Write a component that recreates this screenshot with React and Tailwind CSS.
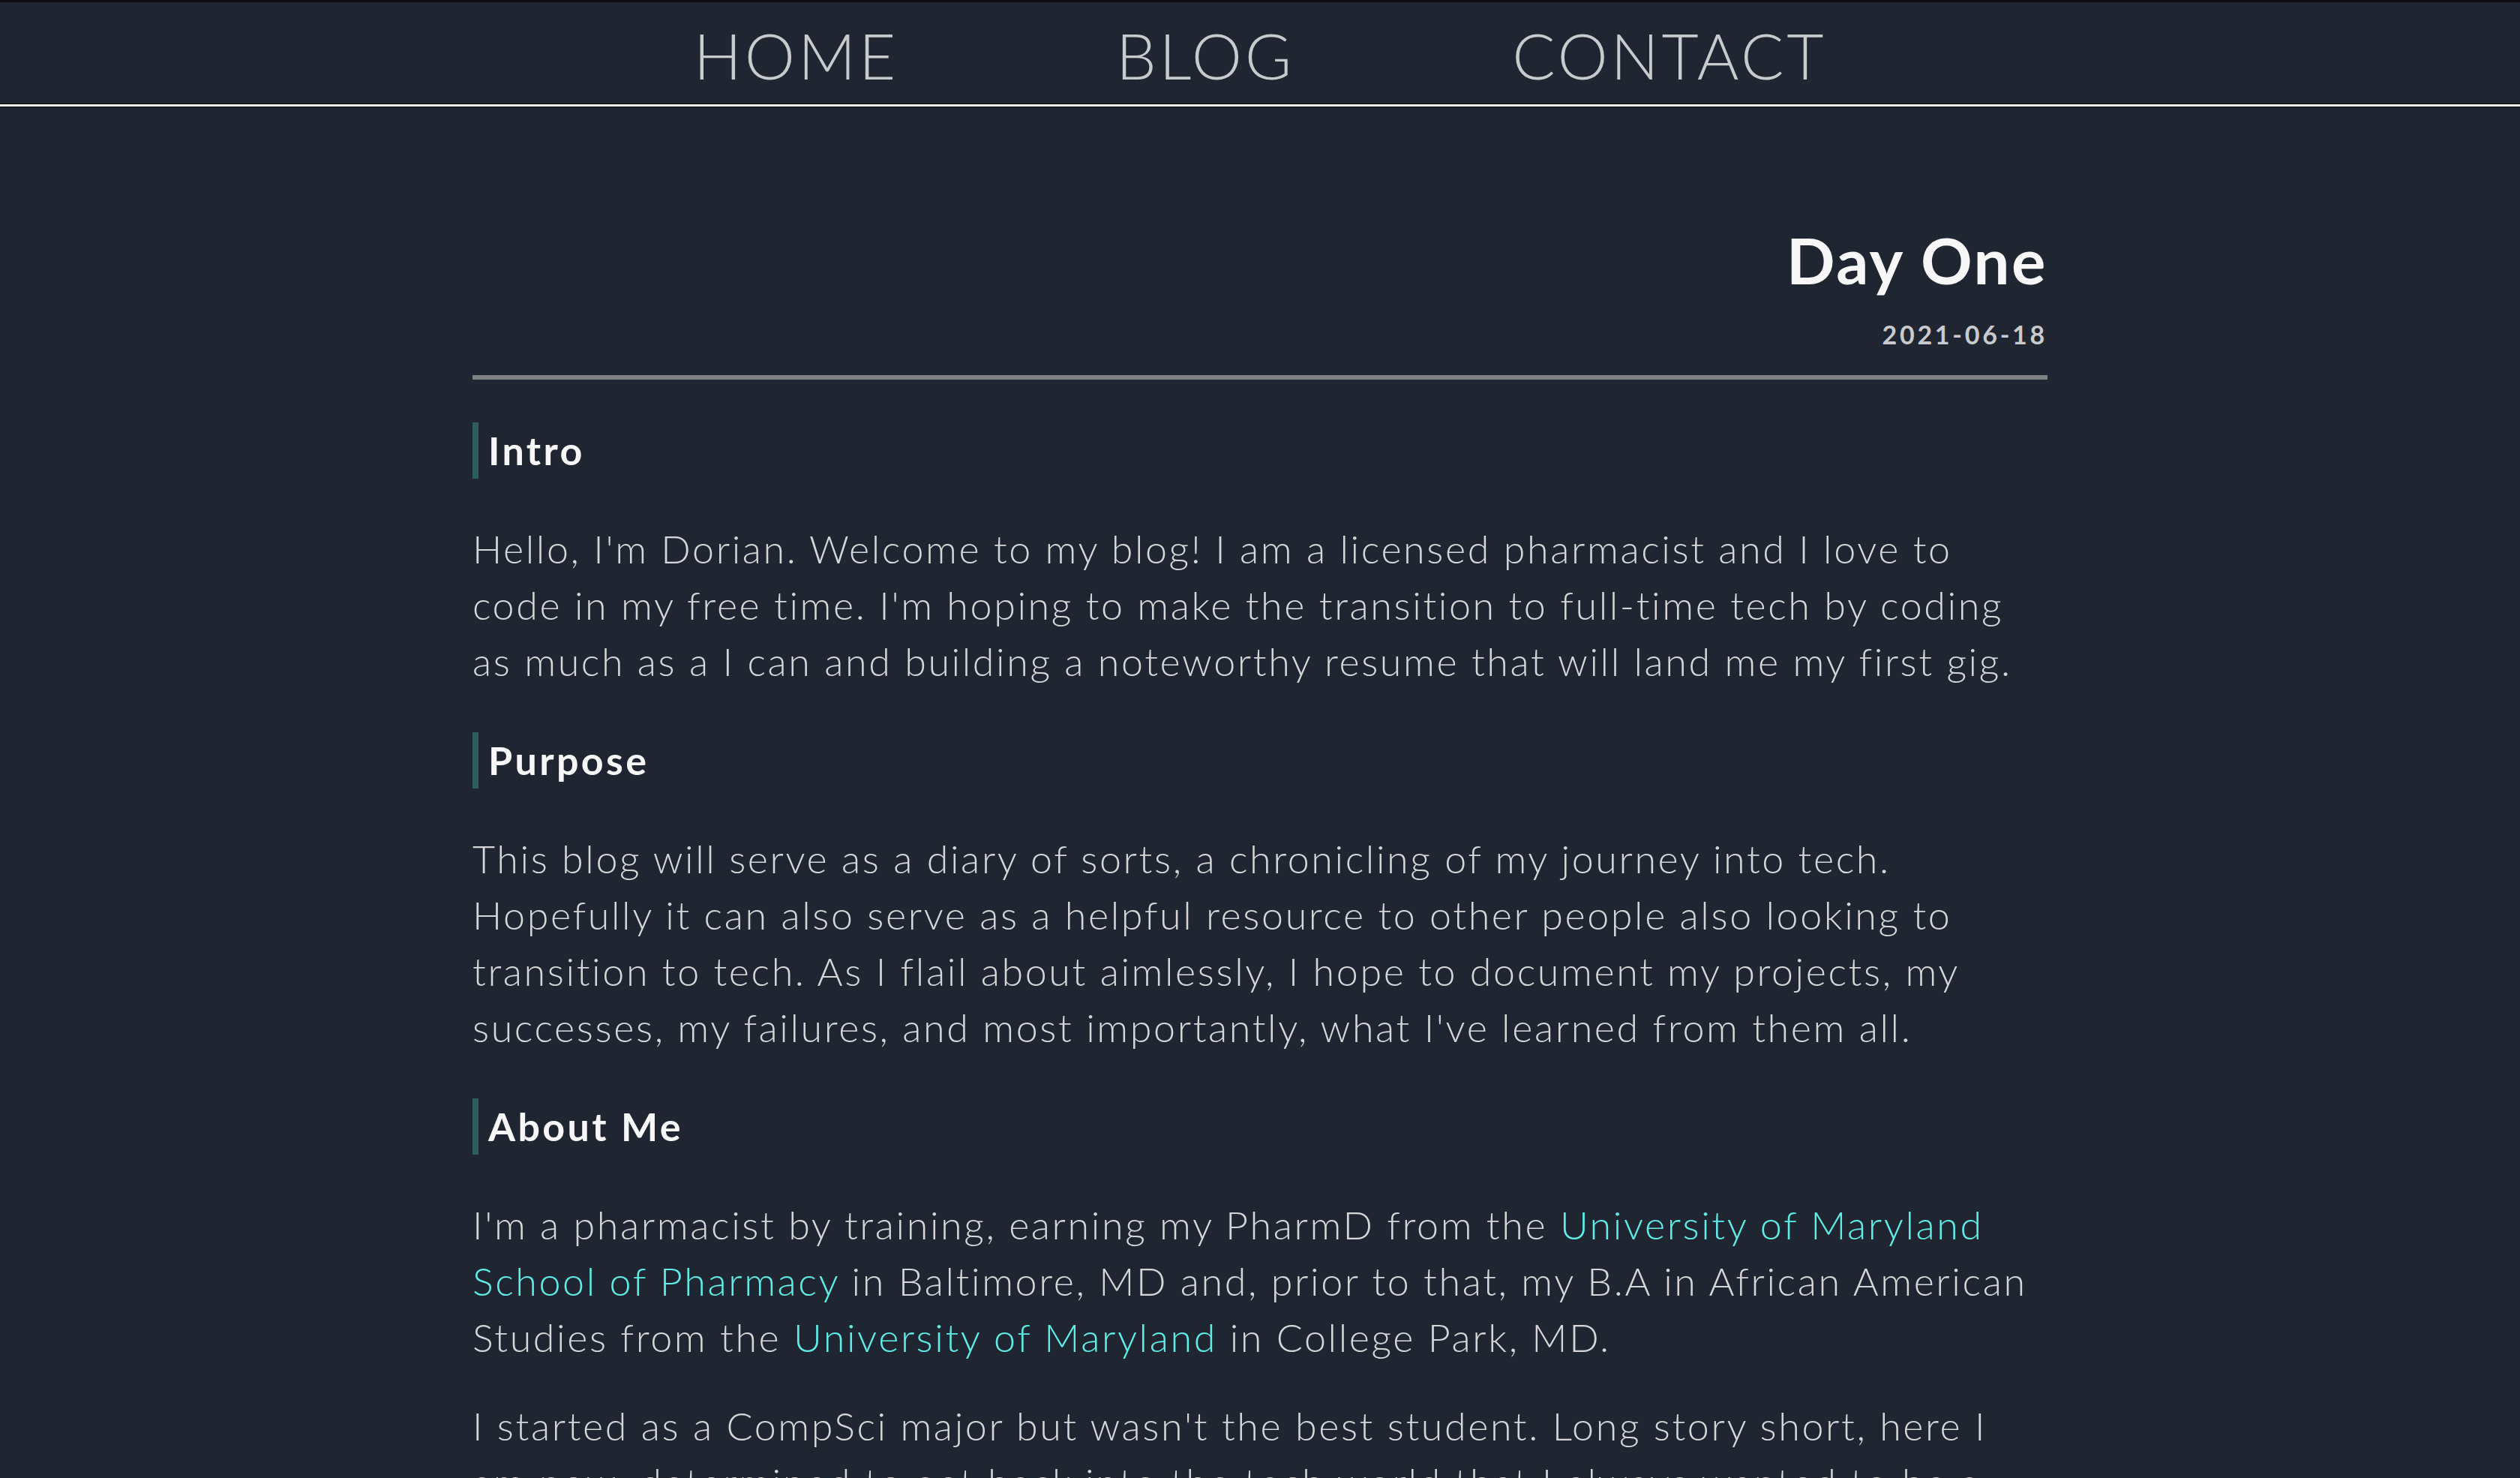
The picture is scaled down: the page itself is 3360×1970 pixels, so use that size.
import React from "react";

const Heading = ({ children }) => (
  <h2 className="mt-[57px] mb-[56px] border-l-[8px] border-[#2e5d5e] pl-[13px] text-[52px] leading-[75px] font-bold tracking-[0.065em] text-[#f7f7f7]">
    {children}
  </h2>
);

const P = ({ children }) => (
  <p className="mb-[43px] text-[52px] leading-[75px] font-light tracking-[0.05em] text-[#d6d6d8]">
    {children}
  </p>
);

const A = ({ children }) => (
  <a href="#" className="text-[#60ede6]">
    {children}
  </a>
);

export default function App() {
  return (
    <div
      className="min-h-screen bg-[#1f2632] overflow-hidden"
      style={{ fontFamily: "Lato, 'Noto Sans', sans-serif" }}
    >
      <div className="border-t-[3px] border-[#0c0e11]">
        <nav className="flex h-[135px] items-center justify-center gap-[290px] pt-[6px] text-[85px] font-light tracking-[0.045em] text-[#c9cacd]">
          <a href="#">HOME</a>
          <a href="#">BLOG</a>
          <a href="#">CONTACT</a>
        </nav>
        <div className="h-[5px] border-y border-black bg-white" />
      </div>

      <main className="mx-auto w-[2100px] pt-[152px]">
        <h1 className="text-right text-[85px] leading-[1.2] font-bold tracking-[0.03em] text-[#f7f7f7]">
          Day One
        </h1>
        <div className="mt-[29px] text-right text-[34px] leading-[1.2] font-bold tracking-[0.11em] text-[#c9cacd]">
          2021-06-18
        </div>
        <div className="mt-[33px] h-[6px] bg-[#7e8082]" />

        <Heading>Intro</Heading>
        <P>
          Hello, I'm Dorian. Welcome to my blog! I am a licensed pharmacist and I love to
          code in my free time. I'm hoping to make the transition to full-time tech by
          coding as much as a I can and building a noteworthy resume that will land me my
          first gig.
        </P>

        <Heading>Purpose</Heading>
        <P>
          This blog will serve as a diary of sorts, a chronicling of my journey into tech.
          Hopefully it can also serve as a helpful resource to other people also looking to
          transition to tech. As I flail about aimlessly, I hope to document my projects, my
          successes, my failures, and most importantly, what I've learned from them all.
        </P>

        <Heading>About Me</Heading>
        <P>
          I'm a pharmacist by training, earning my PharmD from the{" "}
          <A>University of Maryland School of Pharmacy</A> in Baltimore, MD and, prior to
          that, my B.A in African American Studies from the <A>University of Maryland</A> in
          College Park, MD.
        </P>
        <P>
          I started as a CompSci major but wasn't the best student. Long story short, here I
          am now, determined to get back into the tech world that I always wanted to be a
          part of, one small project at a time.
        </P>
      </main>
    </div>
  );
}
